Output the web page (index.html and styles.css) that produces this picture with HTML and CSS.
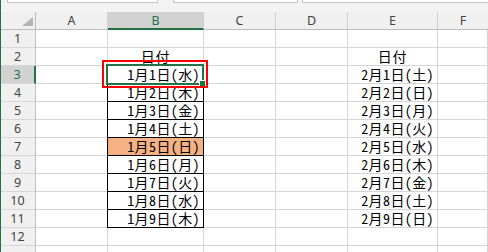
FILE: index.html
```html
<!DOCTYPE html>
<html lang="ja">
<head>
<meta charset="utf-8">
<link rel="stylesheet" href="styles.css">
</head>
<body>
<div class="app">
  <div class="topbar">
    <div class="tb tb1"></div>
    <div class="tb tb2"></div>
    <div class="tb tb3"></div>
  </div>
  <div class="sheet">
    <div class="grid">
      <div class="hd corner"><svg class="tri" width="12" height="10" viewBox="0 0 12 10"><polygon points="11,0 11,9 0,9" fill="#b4b4b4"/></svg></div>
      <div class="hd col">A</div>
      <div class="hd col sel">B</div>
      <div class="hd col">C</div>
      <div class="hd col">D</div>
      <div class="hd col">E</div>
      <div class="hd col last">F</div>

      <div class="rh">1</div><div class="c"></div><div class="c"></div><div class="c"></div><div class="c"></div><div class="c"></div><div class="c"></div>
      <div class="rh">2</div><div class="c"></div><div class="c ctr">日付</div><div class="c"></div><div class="c"></div><div class="c ctr">日付</div><div class="c"></div>
      <div class="rh sel">3</div><div class="c"></div><div class="c r bb">1月1日(水)</div><div class="c"></div><div class="c"></div><div class="c r">2月1日(土)</div><div class="c"></div>
      <div class="rh">4</div><div class="c"></div><div class="c r bx">1月2日(木)</div><div class="c"></div><div class="c"></div><div class="c r">2月2日(日)</div><div class="c"></div>
      <div class="rh">5</div><div class="c"></div><div class="c r bx">1月3日(金)</div><div class="c"></div><div class="c"></div><div class="c r">2月3日(月)</div><div class="c"></div>
      <div class="rh">6</div><div class="c"></div><div class="c r bx">1月4日(土)</div><div class="c"></div><div class="c"></div><div class="c r">2月4日(火)</div><div class="c"></div>
      <div class="rh">7</div><div class="c"></div><div class="c r bx fill">1月5日(日)</div><div class="c"></div><div class="c"></div><div class="c r">2月5日(水)</div><div class="c"></div>
      <div class="rh">8</div><div class="c"></div><div class="c r bx">1月6日(月)</div><div class="c"></div><div class="c"></div><div class="c r">2月6日(木)</div><div class="c"></div>
      <div class="rh">9</div><div class="c"></div><div class="c r bx">1月7日(火)</div><div class="c"></div><div class="c"></div><div class="c r">2月7日(金)</div><div class="c"></div>
      <div class="rh">10</div><div class="c"></div><div class="c r bx">1月8日(水)</div><div class="c"></div><div class="c"></div><div class="c r">2月8日(土)</div><div class="c"></div>
      <div class="rh">11</div><div class="c"></div><div class="c r bx">1月9日(木)</div><div class="c"></div><div class="c"></div><div class="c r">2月9日(日)</div><div class="c"></div>
      <div class="rh">12</div><div class="c"></div><div class="c"></div><div class="c"></div><div class="c"></div><div class="c"></div><div class="c"></div>
      <div class="rh"></div><div class="c"></div><div class="c"></div><div class="c"></div><div class="c"></div><div class="c"></div><div class="c"></div>
    </div>
    <div class="selbox"></div>
    <div class="handle"></div>
    <div class="redbox"></div>
  </div>
</div>
</body>
</html>
```
FILE: styles.css
```css
* { box-sizing: border-box; }
html, body { margin: 0; padding: 0; background: #ffffff; }
body { width: 488px; height: 252px; overflow: hidden; }

.app {
  width: 488px;
  height: 252px;
  border-left: 1px solid #217346;
  overflow: hidden;
  background: #ffffff;
}

.topbar {
  height: 12px;
  background: #f3f3f3;
  display: flex;
  align-items: flex-start;
}
.tb {
  height: 3px;
  background: #ffffff;
  border: 1px solid #c6c6c6;
  border-top: 0;
}
.tb1 { margin-left: 6px; width: 151px; }
.tb2 { margin-left: 15px; width: 125px; }
.tb3 { margin-left: 4px; flex: 1; border-right: 0; }

.sheet { position: relative; }

.grid {
  display: grid;
  grid-template-columns: 35px 72px 96px 72px 72px 90px 1fr;
  grid-auto-rows: 18px;
}

.hd {
  background: #f0f0f0;
  border-right: 1px solid #d0d0d0;
  border-bottom: 1px solid #bdbdbd;
  font-family: "Noto Sans", "DejaVu Sans", sans-serif;
  font-size: 12.5px;
  color: #444444;
  display: flex;
  align-items: center;
  justify-content: center;
  line-height: 17px;
}
.hd.corner {
  border-right: 1px solid #bdbdbd;
  position: relative;
}
.tri { position: absolute; left: 21px; top: 5px; }
.hd.last { border-right: 0; }
.hd.sel {
  background: #d2d2d2;
  color: #217346;
  border-bottom: 2px solid #217346;
}

.rh {
  background: #f0f0f0;
  border-right: 1px solid #bdbdbd;
  border-bottom: 1px solid #d6d6d6;
  font-family: "Noto Sans", "DejaVu Sans", sans-serif;
  font-size: 12.5px;
  color: #444444;
  display: flex;
  align-items: center;
  justify-content: center;
  line-height: 17px;
  padding-right: 1px;
}
.rh.sel {
  background: #d2d2d2;
  color: #217346;
  border-right: 2px solid #217346;
}

.c {
  border-right: 1px solid #d4d4d4;
  border-bottom: 1px solid #d4d4d4;
  font-family: "Noto Sans CJK JP", "Noto Sans CJK SC", sans-serif;
  font-feature-settings: "hwid" 1;
  font-size: 14px;
  line-height: 17px;
  letter-spacing: 0.4px;
  color: #000000;
  display: flex;
  align-items: center;
  white-space: nowrap;
}
.c.r { justify-content: flex-end; padding-right: 3px; }
.c.ctr { justify-content: center; letter-spacing: 0.8px; }
.c.bb { border-bottom-color: #000000; }
.c.bx {
  border-right-color: #000000;
  border-bottom-color: #000000;
  box-shadow: -1px 0 0 #000000;
}
.c.fill { background: #f4b183; }

.selbox {
  position: absolute;
  left: 105px;
  top: 52px;
  width: 98px;
  height: 21px;
  border: 2px solid #217346;
}
.handle {
  position: absolute;
  left: 198px;
  top: 68px;
  width: 7px;
  height: 7px;
  background: #217346;
  border: 1px solid #ffffff;
}
.redbox {
  position: absolute;
  left: 101px;
  top: 48px;
  width: 106px;
  height: 28px;
  border: 2px solid #ff0000;
}
```
